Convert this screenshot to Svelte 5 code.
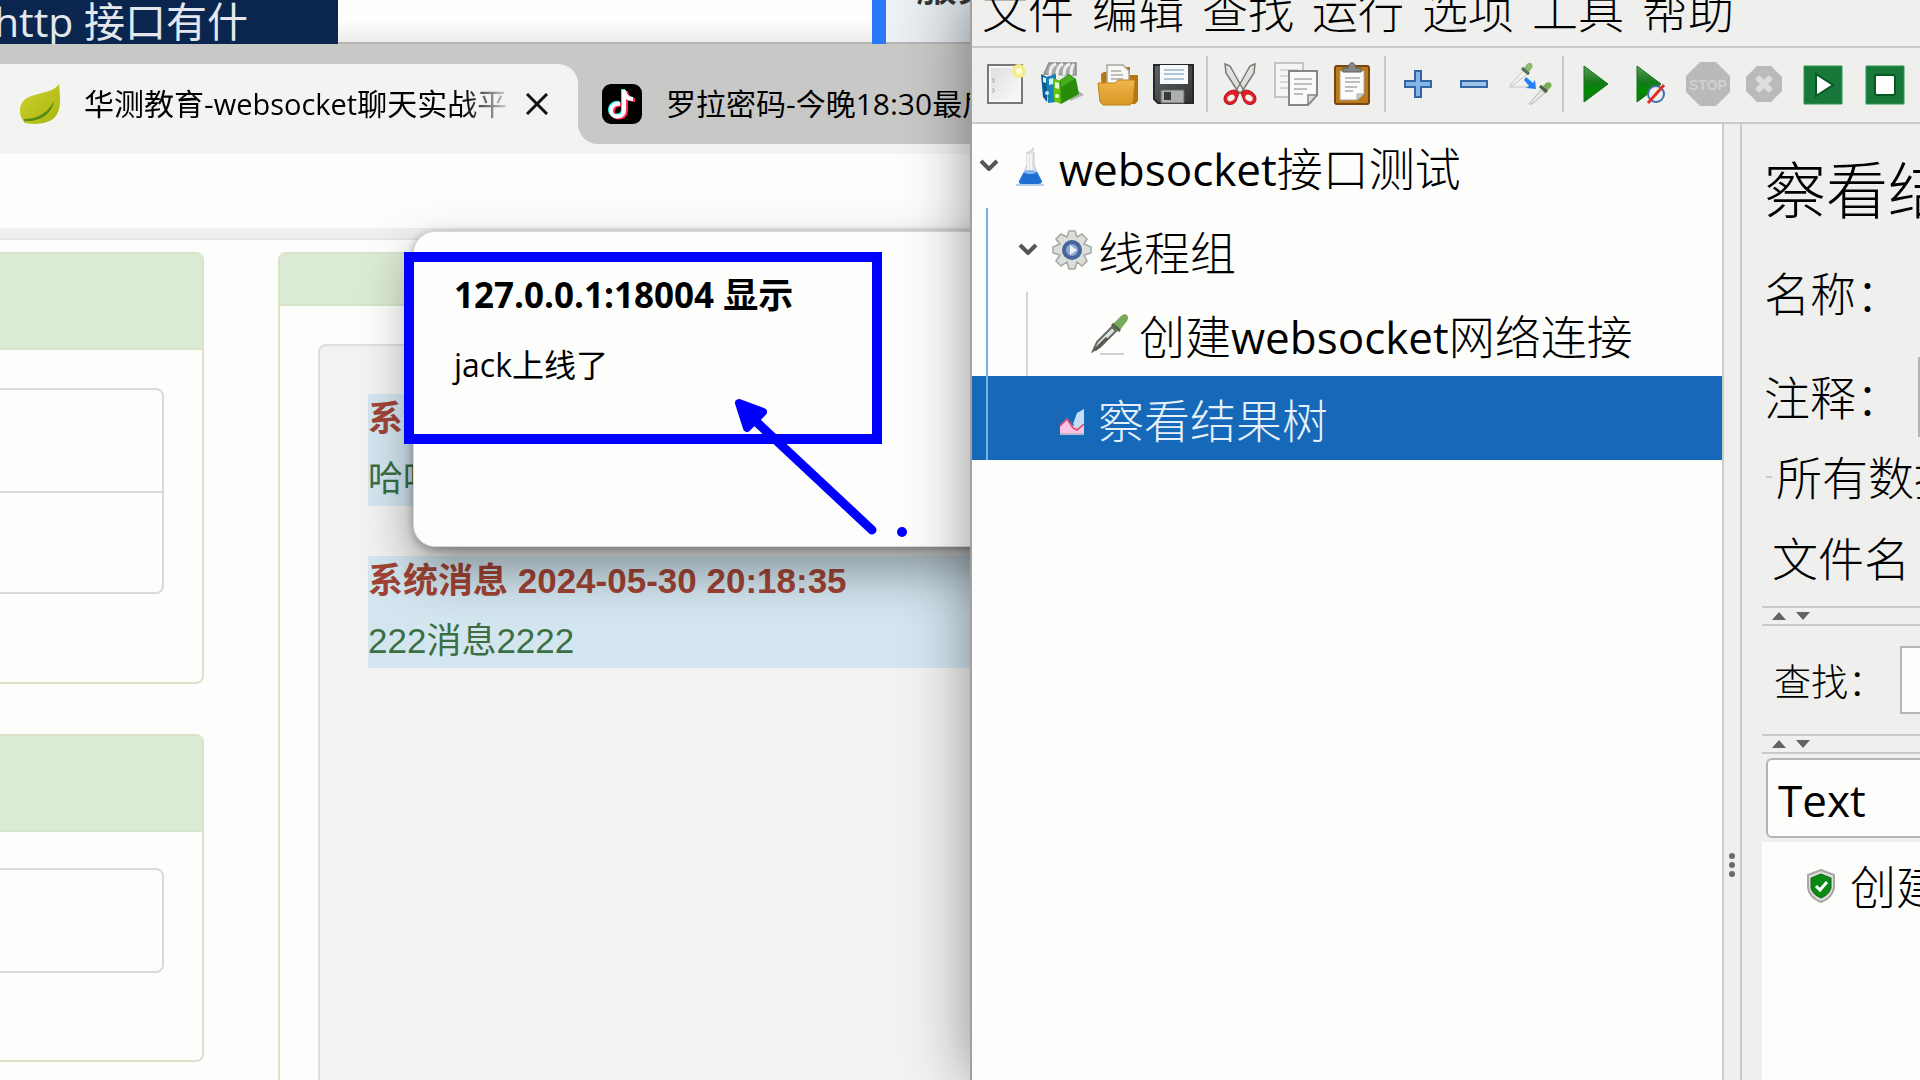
<script>
    let query = '';
    let renderer = 'Text';
    let selected = 3;

    const menus = ['文件', '编辑', '查找', '运行', '选项', '工具', '帮助'];

    const toolGroups = [
        [['new', '新建'], ['templates', '模板'], ['open', '打开'], ['save', '保存']],
        [['cut', '剪切'], ['copy', '复制'], ['paste', '粘贴']],
        [['plus', '展开'], ['minus', '折叠'], ['toggle', '切换']],
        [['play', '启动'], ['playnow', '不停顿启动'], ['stop', '停止'], ['shutdown', '关闭'], ['remotestart', '远程启动'], ['remotestop', '远程停止']]
    ];

    // latin runs are set a little smaller than the Chinese text around them
    const nodes = [
        { icon: 'flask', depth: 0, open: true, parts: ['', 'websocket', '接口测试'] },
        { icon: 'gear', depth: 1, open: true, parts: ['线程组', '', ''] },
        { icon: 'pipette', depth: 2, open: false, parts: ['创建', 'websocket', '网络连接'] },
        { icon: 'chart', depth: 1, open: false, parts: ['察看结果树', '', ''] }
    ];

    const messages = [
        { title: '系统消息', text: '哈哈' },
        { title: '系统消息 2024-05-30 20:18:35', text: '222消息2222' }
    ];
</script>

{#snippet icon(name)}
    <svg class="icon" viewBox="0 0 44 44" aria-hidden="true">
        {#if name === 'new'}
            <rect x="4" y="3" width="34" height="38" fill="#f7f7f7" stroke="#777975" stroke-width="2" />
            <rect x="7" y="6" width="28" height="32" fill="url(#paper)" />
            <path d="M8 17h2v3H8M8 27h2v3H8" fill="none" stroke="#aaa" />
            <circle cx="35" cy="9" r="7" fill="#f4ec8d" />
            <circle cx="35" cy="9" r="3" fill="#fffde0" />
        {:else if name === 'templates'}
            <path d="M4 12L9 1h27v12z" fill="#a9aba8" stroke="#8b8d89" stroke-width="1.5" />
            <path d="M10 13c0-7 2-10 6-11M17 14c0-8 2-11 6-12M24 13c0-7 2-10 6-11M31 13c0-6 1-9 3-11" fill="none" stroke="#eee" stroke-width="3" />
            <path d="M30 39l14-6-5-4-9 6z" fill="#888" opacity=".6" />
            <path d="M1 12l6 3v25l-4-5z" fill="#085c92" />
            <path d="M6 15l10-3v28l-8 1z" fill="#1682b8" />
            <path d="M3 15l3 1v5l-3-1zM9 17l4-1v6l-4 1z" fill="#d5f0ff" />
            <path d="M13 16l8 3v23l-7-3z" fill="#64c40b" />
            <path d="M20 18l9-6 7 5 3 15-18 10z" fill="#288c0a" />
            <path d="M21 18l8-5 6 4-14 8z" fill="#46ad1c" />
            <path d="M15 20l4 1v6l-4-1z" fill="#e5ffd5" />
            <circle cx="17" cy="34" r="2" fill="#e5ffd5" />
            <circle cx="7" cy="31" r="2" fill="#bce5ff" />
        {:else if name === 'open'}
            <path d="M5 12l3-2h6v-5h20v8h8v26l-3 3H6z" fill="#b77510" />
            <path d="M11 3h16l6 6v15H11z" fill="#f7f7f5" stroke="#a8a8a3" stroke-width="1.5" />
            <path d="M15 9h10M15 13h12M15 17h12" stroke="#aaa" stroke-width="1.5" />
            <path d="M2 21h17l3-3h17l-2 22-3 3H7l-3-3z" fill="url(#folder)" stroke="#bf8418" />
        {:else if name === 'save'}
            <path d="M2 3h39v38H6l-4-4z" fill="url(#disk)" stroke="#252628" stroke-width="2" />
            <path d="M8 3h28v19H8z" fill="#f7f9fa" />
            <path d="M12 8h20M12 12h20M12 17h20" stroke="#94b5cc" stroke-width="1.5" />
            <path d="M9 28h23v13H9z" fill="#aeb0b0" stroke="#666" />
            <path d="M12 30h7v8h-7z" fill="#37393b" />
        {:else if name === 'cut'}
            <path d="M7 2l5 2 14 25-5 2L8 11zM37 2l-5 2-14 25 5 2L36 11z" fill="#e0e1df" stroke="#777975" stroke-width="1.5" />
            <path d="M17 28l4 3-3 8c-2 5-12 5-12-2 0-5 5-9 11-9zM27 28l-4 3 3 8c2 5 12 5 12-2 0-5-5-9-11-9z" fill="#df2028" stroke="#af171d" />
            <ellipse cx="13" cy="36" rx="4" ry="3" fill="#efefee" transform="rotate(-35 13 36)" />
            <ellipse cx="31" cy="36" rx="4" ry="3" fill="#efefee" transform="rotate(35 31 36)" />
        {:else if name === 'copy'}
            <path d="M1 1h28v34H1z" fill="#f5f5f4" stroke="#b8b8b6" stroke-width="1.5" />
            <path d="M6 8h18M6 14h18M6 20h8M6 26h8" stroke="#ccc" stroke-width="1.5" />
            <path d="M15 9h28v24l-9 10H15z" fill="#fafaf9" stroke="#858784" stroke-width="2" />
            <path d="M20 17h18M20 22h18M20 27h13M20 32h9" stroke="#aaa" stroke-width="1.5" />
            <path d="M43 33h-9v10z" fill="#ddd" stroke="#858784" stroke-width="1.5" />
        {:else if name === 'paste'}
            <rect x="5" y="4" width="34" height="38" rx="2" fill="#bc7a19" stroke="#764711" stroke-width="2" />
            <path d="M10 9h24v23l-7 6H10z" fill="#fbfbf9" stroke="#a7a7a2" />
            <path d="M13 10V6h5c1-7 7-7 8 0h5v4z" fill="#858782" stroke="#5d5f5a" />
            <path d="M15 16h15M15 20h15M15 25h12M15 29h8" stroke="#aaa" stroke-width="1.5" />
            <path d="M34 32h-7v6z" fill="#ccc" stroke="#aaa" />
        {:else if name === 'plus'}
            <path d="M19 9h6v10h10v6H25v10h-6V25H9v-6h10z" fill="#85b4e6" stroke="#3466a5" stroke-width="2" />
        {:else if name === 'minus'}
            <path d="M9 19h26v6H9z" fill="#9dc3eb" stroke="#3466a5" stroke-width="2" />
        {:else if name === 'toggle'}
            <path d="M1 25h20" stroke="#c4c6c3" />
            <path d="M2 23L15 9l4 3L4 24z" fill="#f2f3f1" stroke="#c0c3be" />
            <path d="M16 6l3-4c3-3 7 0 5 4l-3 4z" fill="#8dbb73" />
            <path d="M14 6l7 6" stroke="#5b6e55" stroke-width="3" />
            <path d="M18 15l7 6 2-3 1 9-10-1 3-2-5-6z" fill="#2582f5" />
            <path d="M21 42l12-14 4 3-13 11z" fill="#e8e9e7" stroke="#b4b7b2" />
            <path d="M35 24l3-3c4-2 7 1 5 4l-4 4z" fill="#79ab5a" />
            <path d="M32 24l7 6" stroke="#4a5e42" stroke-width="3" />
        {:else if name === 'play'}
            <path d="M10 4l24 18-24 18z" fill="url(#green)" stroke="#16701c" />
        {:else if name === 'playnow'}
            <path d="M7 4l24 18L7 40z" fill="url(#green)" stroke="#16701c" />
            <circle cx="26" cy="32" r="8" fill="#efefef" stroke="#3e70ad" stroke-width="2" />
            <path d="M18 41l16-18" stroke="#df3025" stroke-width="3" />
        {:else if name === 'stop'}
            <path d="M14 0h16l14 14v16L30 44H14L0 30V14z" fill="#b9bab9" />
            <text x="22" y="28" text-anchor="middle" class="stop-word">STOP</text>
        {:else if name === 'shutdown'}
            <path d="M15 4h14l11 11v14L29 40H15L4 29V15z" fill="#b9bab9" />
            <path d="M15 15l14 14M29 15L15 29" stroke="#dcdddc" stroke-width="6" />
        {:else if name === 'remotestart'}
            <path d="M3 4h38v38H3z" fill="#17783a" stroke="#299a54" />
            <path d="M15 12l17 11-17 11z" fill="#fff" stroke="#075724" stroke-width="2" />
        {:else if name === 'remotestop'}
            <path d="M3 4h38v38H3z" fill="#17783a" stroke="#299a54" />
            <rect x="12" y="13" width="20" height="20" rx="2" fill="#fff" stroke="#075724" stroke-width="2" />
        {:else if name === 'flask'}
            <path d="M23 3l-4 5h-3v13L9 37q-1 3 2 4h17q3-1 2-4l-7-16V8" fill="#e1e4e7" stroke="#c3c7cb" />
            <path d="M13 28h13l5 9q0 3-4 3H11q-4 0-3-3z" fill="#1d6fd3" />
            <path d="M17 10v16M20 10v16" stroke="#fff" stroke-width="2" opacity=".7" />
            <path d="M5 41h28" stroke="#b7cfe8" stroke-width="2" />
            <ellipse cx="19" cy="28" rx="6" ry="2" fill="#83b4ef" />
        {:else if name === 'gear'}
            <path d="M19 3h6l2 6 5-3 5 5-3 5 7 3v6l-7 2 3 6-5 5-5-4-2 7h-6l-2-7-6 4-5-5 4-6-7-2v-6l7-3-4-5 5-5 6 3z" fill="#dcdedb" stroke="#a4a7a2" stroke-width="1.5" />
            <circle cx="22" cy="22" r="8" fill="#8ba8d1" stroke="#46669b" stroke-width="4" />
            <path d="M20 17l7 5-7 5z" fill="#eaf2ff" />
        {:else if name === 'pipette'}
            <path d="M9 42h24" stroke="#d0d2cf" stroke-width="2" />
            <path d="M2 39l4-9 15-15 4 4L9 35z" fill="#dfe1dd" stroke="#666864" stroke-width="2" />
            <path d="M4 38l12-12" stroke="#555753" stroke-width="3" />
            <path d="M22 12l8-8c5-4 9 0 6 5l-7 9z" fill="#79a95a" />
            <path d="M21 12l8 7" stroke="#4d6741" stroke-width="3" />
        {:else if name === 'chart'}
            <path d="M6 6v32" stroke="#2c629a" />
            <path d="M10 37V29l7-7 6 8 11-6v13H10z" fill="#ffc1e3" />
            <path d="M23 28l4-11 7-4v15l-6 5z" fill="#c5def8" />
            <path d="M10 30l7-7 6 9 4 2 7-6" fill="none" stroke="#cd4666" stroke-width="1.5" />
            <path d="M10 38h24" stroke="#b6bbc8" stroke-width="2" />
        {/if}
    </svg>
{/snippet}

<svg class="defs" aria-hidden="true">
    <defs>
        <linearGradient id="paper" x2="1" y2="1"><stop stop-color="#dedfdd" /><stop offset="1" stop-color="#fafafa" /></linearGradient>
        <linearGradient id="folder" x2="0" y2="1"><stop stop-color="#efb54c" /><stop offset="1" stop-color="#d99722" /></linearGradient>
        <linearGradient id="disk" x2="1" y2="1"><stop stop-color="#606468" /><stop offset="1" stop-color="#303234" /></linearGradient>
        <linearGradient id="green" x2="0" y2="1"><stop stop-color="#579c59" /><stop offset=".45" stop-color="#16791b" /><stop offset=".7" stop-color="#008c00" /><stop offset="1" stop-color="#16721b" /></linearGradient>
        <linearGradient id="leaf" x2="1" y2="1"><stop stop-color="#cfd234" /><stop offset="1" stop-color="#a8b60b" /></linearGradient>
    </defs>
</svg>

<div class="desktop">
    <section class="left">
        <div class="behind">
            <div class="lesson">http 接口有什</div>
            <div class="marker"></div>
            <div class="side-note">服务</div>
        </div>

        <div class="tabs">
            <div class="tab active">
                <svg class="leaf" viewBox="0 0 40 40" aria-hidden="true">
                    <path d="M39 0c1 12 3 25-4 33-6 7-19 8-30 6-5-5-7-14-3-20C9 7 31 12 39 0z" fill="url(#leaf)" />
                    <path d="M5 39l-1-4c13 0 24-6 30-18-2 13-14 21-29 20z" fill="#568b19" />
                </svg>
                <span class="tab-title">华测教育-<span class="ui-latin">websocket</span>聊天实战平</span>
                <button class="close" aria-label="关闭标签页">
                    <svg viewBox="0 0 22 22"><path d="M1 1l20 20M21 1L1 21" fill="none" stroke="#111" stroke-width="3" /></svg>
                </button>
            </div>
            <div class="tab inactive">
                <svg class="tiktok" viewBox="0 0 40 40" aria-hidden="true">
                    <rect width="40" height="40" rx="9" fill="#000" />
                    <g fill="none" stroke-width="4">
                        <path d="M21 5v20c0 9-13 8-13 1 0-5 4-8 9-7M21 7c1 5 4 8 9 8" stroke="#25f4ee" />
                        <path d="M24 7v20c0 9-13 8-13 1 0-5 4-8 8-7M24 8c1 5 4 8 9 8" stroke="#fe2c55" />
                        <path d="M22 6v20c0 9-13 8-13 1 0-5 4-8 9-7M22 7c1 5 4 8 9 8" stroke="#fff" />
                    </g>
                </svg>
                <span>罗拉密码-今晚18:30最后</span>
            </div>
        </div>
        <div class="address"></div>

        <main class="page">
            <div class="column">
                <div class="panel">
                    <div class="panel-head tall"></div>
                    <div class="panel-body first">
                        <div class="group"><div></div><div></div></div>
                    </div>
                </div>
                <div class="panel">
                    <div class="panel-head tall"></div>
                    <div class="panel-body second">
                        <div class="group"><div></div></div>
                    </div>
                </div>
            </div>
            <div class="panel chat">
                <div class="panel-head"></div>
                <div class="well">
                    {#each messages as message}
                        <article class="message">
                            <strong>{message.title}</strong>
                            <p>{message.text}</p>
                        </article>
                    {/each}
                </div>
            </div>

            <div class="dialog" role="alertdialog" aria-labelledby="dialog-title">
                <h2 id="dialog-title">127.0.0.1:18004 显示</h2>
                <p>jack上线了</p>
            </div>
            <div class="highlight"></div>
            <svg class="arrow" viewBox="0 0 180 150" aria-hidden="true">
                <path d="M18 18L142 134" stroke="#00f" stroke-width="9" stroke-linecap="round" />
                <path d="M9 7L33 16L17 32z" fill="#00f" stroke="#00f" stroke-width="8" stroke-linejoin="round" />
                <circle cx="172" cy="136" r="5" fill="#00f" />
            </svg>
        </main>
    </section>

    <section class="jmeter">
        <nav class="menu">
            {#each menus as menu}
                <button>{menu}</button>
            {/each}
        </nav>
        <div class="toolbar">
            {#each toolGroups as group}
                <div class="tool-group">
                    {#each group as [name, label]}
                        <button class:wide={name.startsWith('remote')} aria-label={label}>{@render icon(name)}</button>
                    {/each}
                </div>
            {/each}
        </div>
        <div class="workspace">
            <div class="tree">
                {#each nodes as node, i}
                    <button class="node depth-{node.depth}" class:selected={i === selected} on:click={() => (selected = i)}>
                        <span class="chevron">
                            {#if node.open}
                                <svg viewBox="0 0 20 12"><path d="M2 2l8 8 8-8" fill="none" stroke="#555" stroke-width="4" /></svg>
                            {/if}
                        </span>
                        {@render icon(node.icon)}
                        <span class="node-name">{node.parts[0]}<span class="latin">{node.parts[1]}</span>{node.parts[2]}</span>
                    </button>
                {/each}
            </div>
            <div class="splitter"><i></i><i></i><i></i></div>
            <div class="details">
                <h1>察看结果树</h1>
                <div class="row name">名称：</div>
                <div class="row comment">
                    <label for="comment">注释：</label>
                    <input id="comment" type="text" />
                </div>
                <div class="row legend"><span class="dash"></span>所有数据</div>
                <div class="row file">文件名</div>
                <div class="fold"><span class="up"></span><span class="down"></span></div>
                <div class="row find">
                    <label for="find">查找：</label>
                    <input id="find" type="text" bind:value={query} />
                </div>
                <div class="fold"><span class="up"></span><span class="down"></span></div>
                <select bind:value={renderer} aria-label="结果格式">
                    <option>Text</option>
                </select>
                <div class="results">
                    <div class="result">
                        <svg class="shield" viewBox="0 0 30 34" aria-hidden="true">
                            <path d="M15 1l13 5v13q-2 10-13 14Q4 29 2 19V6z" fill="#dedfdd" stroke="#a5a8a3" stroke-width="2" />
                            <path d="M15 5l10 4v10q-2 7-10 10Q7 26 5 19V9z" fill="#088a13" stroke="#17611b" />
                            <path d="M10 17l4 4 7-8" fill="none" stroke="#fff" stroke-width="3" />
                        </svg>
                        <span>创建</span>
                    </div>
                </div>
            </div>
        </div>
    </section>
</div>

<style>
    :global(body) {
        margin: 0;
        overflow: hidden;
    }

    * {
        box-sizing: border-box;
    }

    button {
        padding: 0;
        border: 0;
        background: none;
        color: inherit;
        font: inherit;
    }

    h1, h2, p {
        margin: 0;
    }

    .defs {
        position: absolute;
        width: 0;
        height: 0;
    }

    .desktop {
        display: grid;
        grid-template-columns: 972fr 948fr;
        height: 100vh;
        overflow: hidden;
        white-space: nowrap;
        font-family: "Open Sans", "Noto Sans CJK SC", sans-serif;
        color: #000;
    }

    .left {
        display: flex;
        flex-direction: column;
        min-width: 0;
        overflow: hidden;
        background: #fdfdfb;
    }

    /* window behind the browser */
    .behind {
        display: flex;
        flex: none;
        height: 44px;
        overflow: hidden;
        background: linear-gradient(#fdfdfd 20px, #ededec 42px, #b4b4b3 42px);
        font-size: 41px;
        line-height: 42px;
    }

    .lesson {
        display: flex;
        justify-content: flex-end;
        width: 338px;
        height: 44px;
        padding-right: 90px;
        overflow: hidden;
        background: #0a264f;
        color: #e4e8ec;
    }

    .marker {
        width: 14px;
        height: 44px;
        margin-left: auto;
        background: #2979fb;
    }

    .side-note {
        width: 86px;
        height: 78px;
        margin-top: -36px;
        padding-left: 30px;
        background: linear-gradient(100deg, #eff4f7, #d9e0e5);
        color: #333;
        font-weight: 500;
    }

    .tabs {
        display: flex;
        flex: none;
        height: 110px;
        padding-bottom: 10px;
        background: linear-gradient(#c8c8c7 50px, #f3f3f2 50px);
        font-size: 30px;
        line-height: 40px;
    }

    .tab {
        display: flex;
        align-items: center;
    }

    .active {
        width: 578px;
        flex: none;
        margin-top: 20px;
        padding-left: 20px;
        border-radius: 0 20px 0 0;
        background: #f3f3f2;
    }

    .leaf, .tiktok {
        flex: none;
        width: 40px;
        height: 40px;
    }

    .tab-title {
        width: 424px;
        margin-left: 24px;
        overflow: hidden;
        mask-image: linear-gradient(90deg, #000 380px, transparent 430px);
    }

    .ui-latin {
        font-size: 29px;
    }

    .close {
        width: 22px;
        height: 22px;
        margin-left: 18px;
        line-height: 0;
    }

    .inactive {
        flex: 1;
        min-width: 0;
        gap: 24px;
        padding: 20px 0 0 24px;
        overflow: hidden;
        border-radius: 0 0 0 20px;
        background: #c8c8c7;
    }

    .address {
        flex: none;
        height: 86px;
        border-bottom: 2px solid #e6e6e5;
        background: linear-gradient(#fdfdfb 74px, #efefee 74px);
    }

    .page {
        position: relative;
        display: flex;
        flex: 1;
        gap: 74px;
        min-height: 0;
        padding-top: 12px;
    }

    .column {
        display: flex;
        flex: none;
        flex-direction: column;
        gap: 50px;
        width: 204px;
    }

    .column .panel {
        border-left: 0;
        border-radius: 0 8px 8px 0;
    }

    .panel {
        border: 2px solid #d8e3ca;
        border-radius: 8px;
    }

    .panel-head {
        height: 52px;
        border-bottom: 2px solid #d6e5c9;
        background: #dbead4;
    }

    .panel-head.tall {
        height: 96px;
    }

    .panel-body {
        padding: 36px 38px 0 0;
    }

    .first {
        height: 332px;
        padding-top: 38px;
    }

    .second {
        height: 228px;
    }

    .group {
        border: 2px solid #d9d9d9;
        border-left: 0;
        border-radius: 0 8px 8px 0;
    }

    .group div {
        height: 101px;
    }

    .group div + div {
        border-top: 2px solid #d9d9d9;
    }

    .chat {
        flex: 1;
        min-width: 0;
        border-right: 0;
        border-bottom: 0;
        border-radius: 8px 0 0 0;
    }

    .well {
        display: flex;
        flex-direction: column;
        gap: 50px;
        height: 100%;
        margin: 38px 0 0 38px;
        padding: 48px 0 0 48px;
        border: 2px solid #dededd;
        border-right: 0;
        border-radius: 8px 0 0 0;
        background: #f2f2f1;
    }

    .message {
        height: 112px;
        background: #d3e6f0;
        color: #3c6e43;
        font-family: "Liberation Sans", "Noto Sans CJK SC", sans-serif;
        font-size: 35px;
        line-height: 50px;
    }

    .message strong {
        display: block;
        margin-bottom: 10px;
        color: #a04435;
    }

    .dialog {
        position: absolute;
        top: -9px;
        left: 413px;
        width: 900px;
        height: 316px;
        padding: 38px 40px;
        border: 1px solid #d8d8d7;
        border-radius: 22px;
        background: #fdfdfc;
        box-shadow: 0 24px 50px rgba(0, 0, 0, 0.38), 0 2px 8px rgba(0, 0, 0, 0.3);
        font-size: 32px;
        line-height: 50px;
    }

    .dialog h2 {
        margin-bottom: 20px;
        font-size: 35px;
        line-height: 50px;
    }

    .highlight {
        position: absolute;
        top: 12px;
        left: 404px;
        width: 478px;
        height: 192px;
        border: 10px solid #00f;
    }

    .arrow {
        position: absolute;
        top: 156px;
        left: 730px;
        width: 180px;
        height: 150px;
    }

    /* test tool window */
    .jmeter {
        position: relative;
        display: flex;
        flex-direction: column;
        min-width: 0;
        background: #efefee;
        box-shadow: -2px 0 0 #a0a0a0, 0 0 60px rgba(0, 0, 0, 0.45);
        font-family: "Noto Sans", "Noto Sans CJK SC", sans-serif;
        font-size: 46px;
        font-weight: 300;
        line-height: 60px;
    }

    .menu {
        display: flex;
        flex: none;
        align-items: flex-end;
        gap: 18px;
        height: 48px;
        padding: 0 0 6px 10px;
        overflow: hidden;
        border-bottom: 2px solid #cacac9;
    }

    .toolbar {
        display: flex;
        flex: none;
        align-items: center;
        height: 76px;
        padding: 0 0 2px 6px;
        border-bottom: 2px solid #cacac9;
    }

    .tool-group {
        display: flex;
        align-items: center;
        height: 56px;
    }

    .tool-group + .tool-group {
        margin-left: 4px;
        padding-left: 4px;
        border-left: 2px solid #cacac9;
    }

    .tool-group button {
        width: 56px;
        height: 44px;
        line-height: 0;
    }

    .tool-group .wide {
        width: 62px;
    }

    .icon {
        flex: none;
        width: 44px;
        height: 44px;
    }

    .stop-word {
        fill: #d0d1d0;
        font: 700 14px "Liberation Sans", sans-serif;
    }

    .workspace {
        display: grid;
        flex: 1;
        grid-template-columns: minmax(0, 750fr) 20px minmax(0, 178fr);
        min-height: 0;
    }

    .tree {
        position: relative;
        background: #fdfdfb;
    }

    .tree::after {
        content: "";
        position: absolute;
        top: 84px;
        left: 14px;
        width: 2px;
        height: 252px;
        background: #75b1e4;
    }

    .node {
        position: relative;
        display: flex;
        align-items: center;
        width: 100%;
        height: 84px;
        padding-left: 7px;
    }

    .depth-1 {
        padding-left: 46px;
    }

    .depth-2 {
        padding-left: 87px;
    }

    .depth-2::before {
        content: "";
        position: absolute;
        top: 0;
        left: 54px;
        width: 2px;
        height: 84px;
        background: #d5d5d4;
    }

    .selected {
        background: #1668b8;
        color: #e6f0fa;
    }

    .chevron {
        display: block;
        width: 20px;
        margin: 0 12px 8px 0;
        line-height: 0;
    }

    .node-name {
        margin-left: 4px;
        padding-top: 4px;
    }

    .latin {
        font-family: "Open Sans", sans-serif;
        font-size: 44px;
        font-weight: 400;
    }

    .splitter {
        display: flex;
        flex-direction: column;
        align-items: center;
        gap: 3px;
        padding-top: 729px;
        border: solid #cacac9;
        border-width: 0 2px;
    }

    .splitter i {
        width: 6px;
        height: 6px;
        border-radius: 50%;
        background: #6b6b6b;
    }

    .details {
        display: flex;
        flex-direction: column;
        padding-left: 20px;
        overflow: hidden;
    }

    h1 {
        height: 112px;
        padding: 20px 0 0 2px;
        font-size: 62px;
        font-weight: 300;
        line-height: 92px;
    }

    .row {
        display: flex;
        flex: none;
        align-items: center;
        padding-left: 2px;
    }

    .name {
        height: 114px;
    }

    .comment {
        height: 94px;
    }

    .comment label {
        width: 154px;
    }

    .legend {
        height: 66px;
        padding-left: 4px;
    }

    .dash {
        flex: none;
        width: 6px;
        height: 2px;
        margin-right: 4px;
        background: #cacac9;
    }

    .file {
        height: 96px;
        padding-left: 10px;
    }

    .find {
        height: 108px;
        padding-left: 12px;
        font-size: 37px;
    }

    .find label {
        width: 126px;
        padding-top: 4px;
    }

    label {
        flex: none;
    }

    input {
        flex: 1;
        min-width: 0;
        height: 80px;
        padding: 0;
        border: 2px solid #b5b5b4;
        border-right: 0;
        background: #fdfdfb;
    }

    .find input {
        height: 68px;
    }

    .fold {
        display: flex;
        flex: none;
        align-items: center;
        gap: 10px;
        height: 20px;
        padding-left: 10px;
        border: solid #cacac9;
        border-width: 2px 0;
    }

    .up, .down {
        border: solid transparent;
        border-width: 0 7px;
    }

    .up {
        border-bottom: 8px solid #636363;
    }

    .down {
        border-top: 8px solid #636363;
    }

    select {
        flex: none;
        height: 80px;
        margin: 4px 0 4px 4px;
        padding: 4px 0 0 10px;
        border: 2px solid #b5b5b4;
        border-right: 0;
        border-radius: 6px 0 0 6px;
        appearance: none;
        background: #fdfdfb;
        color: #000;
        font: 400 44px "Open Sans", sans-serif;
    }

    .results {
        flex: 1;
        padding: 14px 0 0 44px;
        background: #fdfdfb;
    }

    .result {
        display: flex;
        align-items: center;
        gap: 14px;
    }

    .shield {
        flex: none;
        width: 30px;
        height: 34px;
    }
</style>
